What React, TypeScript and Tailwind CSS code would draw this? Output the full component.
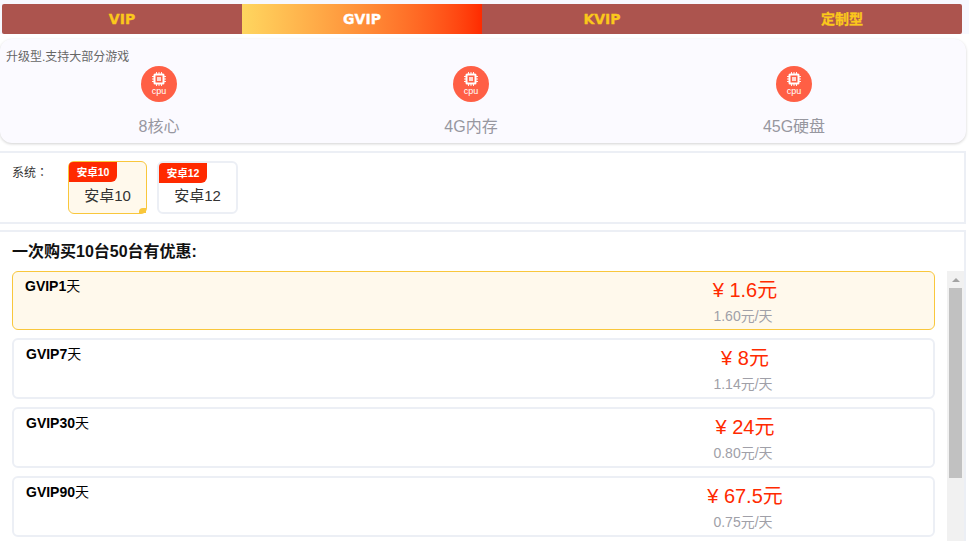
import { ReactNode } from 'react';

const font = { fontFamily: '"Liberation Sans", "Noto Sans CJK SC", sans-serif' };

function CpuBadge() {
  return (
    <div className="w-9 h-9 rounded-full bg-[#ff5f45] flex flex-col items-center text-white">
      <svg width="14" height="14" viewBox="0 0 14 14" className="mt-[6px]" fill="none">
        <path d="M4.5 0v14M7 0v14M9.5 0v14M0 4.5h14M0 7h14M0 9.5h14" stroke="#fff" strokeWidth="0.9" />
        <rect x="1.5" y="1.5" width="11" height="11" rx="1.5" fill="#fff" />
        <rect x="3.5" y="3.5" width="7" height="7" fill="#ff5f45" />
        <rect x="5" y="5" width="4" height="4" fill="#ffd9d2" />
      </svg>
      <span className="text-[9px] leading-[9px] mt-[1px]">cpu</span>
    </div>
  );
}

function Spec({ label, className }: { label: string; className: string }) {
  return (
    <div className={`flex flex-col items-center w-[120px] ${className}`}>
      <CpuBadge />
      <span className="mt-[13px] text-[16px] leading-[24px] text-[#97979f]">{label}</span>
    </div>
  );
}

function Tab({ children, className }: { children: ReactNode; className?: string }) {
  return (
    <div className={`w-[240px] h-full flex items-center justify-center text-[14px] font-bold font-['DejaVu_Sans','Noto_Sans_CJK_SC',sans-serif] [-webkit-text-stroke:0.3px_currentColor] ${className ?? 'text-[#fbc81b]'}`}>
      {children}
    </div>
  );
}

function OsOption({ name, active }: { name: string; active?: boolean }) {
  return (
    <div className={`relative h-[53px] rounded-[6px] ${active ? 'w-[79px] border border-[#f9c73c] bg-[#fff9ec]' : 'w-[81px] border-2 border-[#eceff5] bg-white'}`}>
      <div className="absolute left-0 top-0 w-[48px] h-[20px] bg-[#ff2a00] rounded-br-[6px] rounded-tl-[4px] text-white text-[10.5px] font-bold leading-[20px] text-center">
        {name}
      </div>
      <div className={`text-center text-[15px] leading-[22px] text-[#333] ${active ? 'pt-[23px]' : 'pt-[22px]'}`}>{name}</div>
      {active && <div className="absolute right-0 bottom-0 w-[7px] h-[5px] bg-[#f9c73c] rounded-tl-[4px]" />}
    </div>
  );
}

function PlanRow({ name, price, perDay, active }: { name: string; price: string; perDay: string; active?: boolean }) {
  return (
    <div className={`flex justify-between pl-[12px] pt-[4px] rounded-[6px] ${active ? 'h-[59px] mb-[8px] pr-[131px] border border-[#f9c73c] bg-[#fff9ec]' : 'h-[61px] mb-[8px] pr-[130px] border-2 border-[#eceff5] bg-white'}`}>
      <div className="text-[14px] leading-[20px] font-bold text-black">
        {name}
        <span className="font-normal">天</span>
      </div>
      <div className="w-[120px] flex flex-col items-center">
        <div className="pl-[4px] text-[20px] leading-[28px] text-[#ff2a00] whitespace-nowrap">¥ {price}元</div>
        <div className="text-[14px] leading-[20px] mt-[2px] text-[#a0a0a8] whitespace-nowrap">{perDay}</div>
      </div>
    </div>
  );
}

export default function App() {
  return (
    <div className="w-[969px] h-[541px] overflow-hidden bg-white" style={font}>
      <div className="pt-[4px] px-[2px] bg-[#f6f8ff]">
        <div className="w-[960px] h-[30px] flex rounded-[2px] overflow-hidden bg-[#ac544e]">
          <Tab>VIP</Tab>
          <Tab className="text-white bg-gradient-to-r from-[#fdd65f] to-[#ff2a00]">GVIP</Tab>
          <Tab>KVIP</Tab>
          <Tab>定制型</Tab>
        </div>
      </div>

      <div className="mt-[5px] w-[966px] h-[104px] rounded-[12px] bg-[#fbfaff] shadow-[0_1px_3px_rgba(0,0,0,0.18)] pt-[9px]">
        <div className="pl-[6px] h-[18px] text-[12px] leading-[18px] text-[#666]">升级型.支持大部分游戏</div>
        <div className="flex">
          <Spec label="8核心" className="ml-[99px]" />
          <Spec label="4G内存" className="ml-[192px]" />
          <Spec label="45G硬盘" className="ml-[203px]" />
        </div>
      </div>

      <div className="mt-[8px] w-[966px] h-[73px] border-y-2 border-r-2 border-[#eceff5] flex pl-[12px] pt-[8px]">
        <div className="w-[56px] text-[12px] leading-[22px] text-[#333]">
          系统<span className="font-['Noto_Sans_CJK_TC',sans-serif]">：</span>
        </div>
        <div className="flex gap-[10px] items-start">
          <OsOption name="安卓10" active />
          <OsOption name="安卓12" />
        </div>
      </div>

      <div className="mt-[6px] w-[966px] h-[320px] border-t-2 border-r-2 border-[#eceff5] pt-[8px]">
        <div className="pl-[12px] text-[16px] leading-[24px] font-bold text-[#111]">一次购买10台50台有优惠:</div>
        <div className="mt-[7px] flex">
          <div className="ml-[12px] w-[923px] shrink-0">
            <PlanRow name="GVIP1" price="1.6" perDay="1.60元/天" active />
            <PlanRow name="GVIP7" price="8" perDay="1.14元/天" />
            <PlanRow name="GVIP30" price="24" perDay="0.80元/天" />
            <PlanRow name="GVIP90" price="67.5" perDay="0.75元/天" />
          </div>
          <div className="ml-[12px] w-[17px] h-[270px] shrink-0 bg-[#f1f1f1] flex flex-col items-center">
            <div className="h-[17px] flex items-center justify-center">
              <div className="w-0 h-0 border-x-[4px] border-x-transparent border-b-[4px] border-b-[#a3a3a3]" />
            </div>
            <div className="w-[13px] h-[190px] bg-[#c1c1c1]" />
          </div>
        </div>
      </div>
    </div>
  );
}
